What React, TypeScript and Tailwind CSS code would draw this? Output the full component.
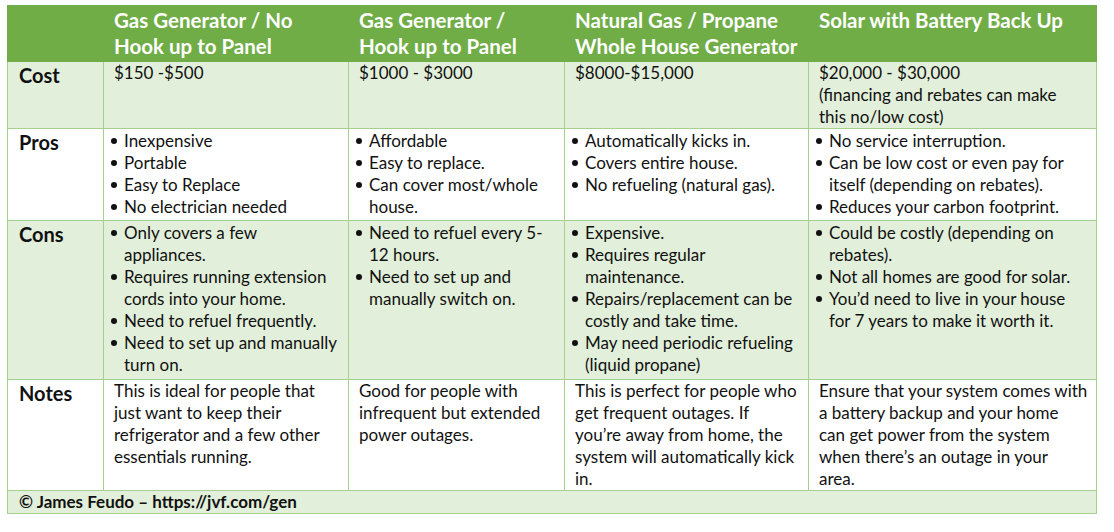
import React from "react";

const font = { fontFamily: "Lato, 'Open Sans', sans-serif" };

type Cell = { bullets?: string[][]; lines?: string[] };

const headers: string[][] = [
  ["Gas Generator / No", "Hook up to Panel"],
  ["Gas Generator /", "Hook up to Panel"],
  ["Natural Gas / Propane", "Whole House Generator"],
  ["Solar with Battery Back Up"],
];

const rows: { label: string; bg: string; h: string; cells: Cell[] }[] = [
  {
    label: "Cost",
    bg: "bg-[#E2EFDA]",
    h: "h-[66px]",
    cells: [
      { lines: ["$150 -$500"] },
      { lines: ["$1000 - $3000"] },
      { lines: ["$8000-$15,000"] },
      { lines: ["$20,000 - $30,000", "(financing and rebates can make", "this no/low cost)"] },
    ],
  },
  {
    label: "Pros",
    bg: "bg-white",
    h: "h-[92px]",
    cells: [
      { bullets: [["Inexpensive"], ["Portable"], ["Easy to Replace"], ["No electrician needed"]] },
      { bullets: [["Affordable"], ["Easy to replace."], ["Can cover most/whole", "house."]] },
      { bullets: [["Automatically kicks in."], ["Covers entire house."], ["No refueling (natural gas)."]] },
      {
        bullets: [
          ["No service interruption."],
          ["Can be low cost or even pay for", "itself (depending on rebates)."],
          ["Reduces your carbon footprint."],
        ],
      },
    ],
  },
  {
    label: "Cons",
    bg: "bg-[#E2EFDA]",
    h: "h-[159px]",
    cells: [
      {
        bullets: [
          ["Only covers a few", "appliances."],
          ["Requires running extension", "cords into your home."],
          ["Need to refuel frequently."],
          ["Need to set up and manually", "turn on."],
        ],
      },
      { bullets: [["Need to refuel every 5-", "12 hours."], ["Need to set up and", "manually switch on."]] },
      {
        bullets: [
          ["Expensive."],
          ["Requires regular", "maintenance."],
          ["Repairs/replacement can be", "costly and take time."],
          ["May need periodic refueling", "(liquid propane)"],
        ],
      },
      {
        bullets: [
          ["Could be costly (depending on", "rebates)."],
          ["Not all homes are good for solar."],
          ["You\u2019d need to live in your house", "for 7 years to make it worth it."],
        ],
      },
    ],
  },
  {
    label: "Notes",
    bg: "bg-white",
    h: "h-[111px]",
    cells: [
      { lines: ["This is ideal for people that", "just want to keep their", "refrigerator and a few other", "essentials running."] },
      { lines: ["Good for people with", "infrequent but extended", "power outages."] },
      {
        lines: [
          "This is perfect for people who",
          "get frequent outages. If",
          "you\u2019re away from home, the",
          "system will automatically kick",
          "in.",
        ],
      },
      {
        lines: [
          "Ensure that your system comes with",
          "a battery backup and your home",
          "can get power from the system",
          "when there\u2019s an outage in your",
          "area.",
        ],
      },
    ],
  },
];

function CellBody({ cell }: { cell: Cell }) {
  if (cell.bullets) {
    return (
      <div className="pt-[1px]">
        {cell.bullets.map((item, i) => (
          <div key={i} className="flex">
            <div className="w-[20px] shrink-0 flex justify-center pt-[8px]">
              <span className="block w-[6px] h-[6px] rounded-full bg-[#111]" />
            </div>
            <div>
              {item.map((l, j) => (
                <div key={j} className="whitespace-nowrap">
                  {l}
                </div>
              ))}
            </div>
          </div>
        ))}
      </div>
    );
  }
  return (
    <div className="pl-[10px]">
      {cell.lines!.map((l, j) => (
        <div key={j} className="whitespace-nowrap">
          {l}
        </div>
      ))}
    </div>
  );
}

export default function App() {
  return (
    <div className="w-[1114px] h-[532px] bg-white pt-[5px] pl-[7px]" style={font}>
      <table className="table-fixed border-collapse w-[1089px] text-[#111] text-[17px] leading-[22px]">
        <colgroup>
          <col className="w-[96px]" />
          <col className="w-[245px]" />
          <col className="w-[216px]" />
          <col className="w-[244px]" />
          <col className="w-[288px]" />
        </colgroup>
        <thead>
          <tr className="h-[56px] bg-[#70AD47]">
            <th className="border border-[#70AD47]" />
            {headers.map((h, i) => (
              <th
                key={i}
                className="border border-[#70AD47] align-top text-left font-bold text-white text-[20.5px] leading-[26px] pl-[10px] pt-[1px]"
              >
                {h.map((l, j) => (
                  <div key={j} className="whitespace-nowrap">
                    {l}
                  </div>
                ))}
              </th>
            ))}
          </tr>
        </thead>
        <tbody>
          {rows.map((r) => (
            <tr key={r.label} className={`${r.h} ${r.bg}`}>
              <td className="border border-[#A8D08D] align-top pl-[11px] font-bold text-[20px] leading-[27px]">
                {r.label}
              </td>
              {r.cells.map((c, i) => (
                <td key={i} className="border border-[#A8D08D] align-top p-0">
                  <CellBody cell={c} />
                </td>
              ))}
            </tr>
          ))}
          <tr className="h-[23px] bg-[#E2EFDA]">
            <td colSpan={5} className="border border-[#A8D08D] align-top pl-[11px] font-bold text-[17px] leading-[22px]">
              © James Feudo – https://jvf.com/gen
            </td>
          </tr>
        </tbody>
      </table>
    </div>
  );
}
